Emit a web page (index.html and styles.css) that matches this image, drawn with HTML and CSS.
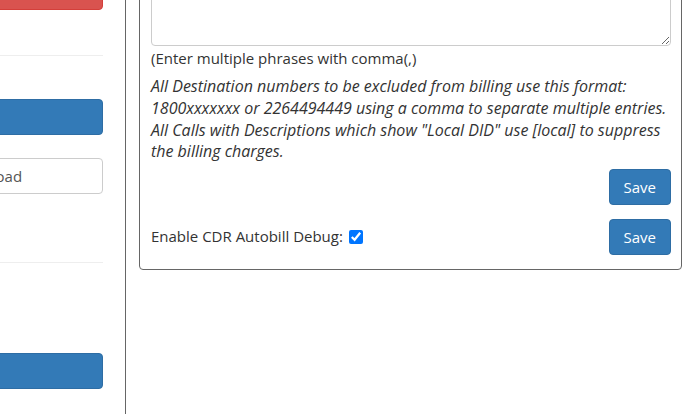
FILE: index.html
```html
<!DOCTYPE html>
<html>
<head>
<meta charset="utf-8">
<link rel="stylesheet" href="styles.css">
</head>
<body>
<div class="layout">
  <aside class="sidebar">
    <div class="side-inner">
      <button class="btn btn-danger btn-block">Delete</button>
      <hr class="sep sep-1">
      <button class="btn btn-primary btn-block gap-a">Save</button>
      <div class="input-group">
        <span class="addon">Choose file</span>
        <input class="form-control" type="text" value="Download">
      </div>
      <hr class="sep sep-2">
      <button class="btn btn-primary btn-block gap-b">Upload</button>
    </div>
  </aside>
  <main class="main">
    <section class="panel">
      <textarea class="phrases"></textarea>
      <div class="hint">(Enter multiple phrases with comma(,)</div>
      <p class="note">All Destination numbers to be excluded from billing use this format: 1800xxxxxxx or 2264494449 using a comma to separate multiple entries. All Calls with Descriptions which show "Local DID" use [local] to suppress the billing charges.</p>
      <div class="row-save">
        <button class="btn btn-primary">Save</button>
      </div>
      <div class="row-debug">
        <label class="debug-label">Enable CDR Autobill Debug:<input type="checkbox" checked></label>
        <button class="btn btn-primary">Save</button>
      </div>
    </section>
  </main>
</div>
</body>
</html>
```
FILE: styles.css
```css
html, body {
  margin: 0;
  padding: 0;
  height: 100%;
  overflow: hidden;
  background: #fff;
}
body {
  font-family: "Open Sans", "DejaVu Sans", sans-serif;
  font-size: 15px;
  line-height: 1.42857;
  color: #333;
}
.layout {
  display: flex;
  height: 414px;
}
.sidebar {
  width: 103px;
  padding-right: 22px;
  border-right: 1px solid #666;
  flex: none;
}
.side-inner {
  width: 300px;
  margin-left: -197px;
  margin-top: -26px;
  display: flex;
  flex-direction: column;
}
.btn {
  font-family: inherit;
  font-size: 15px;
  line-height: 22px;
  padding: 6px 14px;
  border: 1px solid transparent;
  border-radius: 4px;
  color: #fff;
  cursor: pointer;
  box-sizing: border-box;
  height: 36px;
}
.btn-primary {
  background: #337ab7;
  border-color: #2e6da4;
}
.btn-danger {
  background: #d9534f;
  border-color: #d43f3a;
}
.btn-block {
  display: block;
  width: 100%;
}
.sep {
  border: 0;
  border-top: 1px solid #eee;
  margin: 0;
  height: 0;
}
.sep-1 { margin-top: 45px; }
.gap-a { margin-top: 43px; }
.input-group {
  display: flex;
  margin-top: 23px;
}
.addon {
  width: 135px;
  flex: none;
  height: 36px;
  overflow: hidden;
  color: transparent;
}
.form-control {
  flex: 1;
  min-width: 0;
  height: 36px;
  box-sizing: border-box;
  padding: 6px 12px;
  border: 1px solid #ccc;
  border-radius: 4px;
  font-family: inherit;
  font-size: 15px;
  color: #555;
  background: #fff;
}
.sep-2 { margin-top: 68px; }
.gap-b { margin-top: 90px; }

.main {
  flex: 1;
  padding: 0 16px 0 13px;
}
.panel {
  margin-top: -61px;
  border: 1px solid #666;
  border-radius: 0 0 4px 4px;
  padding: 10px 10px 14px 11px;
}
.phrases {
  display: block;
  box-sizing: border-box;
  width: 100%;
  height: 96px;
  margin: 0;
  border: 1px solid #ccc;
  border-radius: 4px;
  font-family: inherit;
  font-size: 15px;
}
.hint {
  margin-top: 2px;
}
.note {
  margin: 7px 0 0;
  font-style: italic;
  font-size: 16px;
  line-height: 21.6px;
}
.row-save {
  display: flex;
  justify-content: flex-end;
  margin-top: 6px;
}
.row-debug {
  display: flex;
  justify-content: space-between;
  align-items: center;
  margin-top: 14px;
}
.debug-label input {
  width: 14px;
  height: 14px;
  margin: 0 0 0 6px;
  vertical-align: -2px;
}
```
